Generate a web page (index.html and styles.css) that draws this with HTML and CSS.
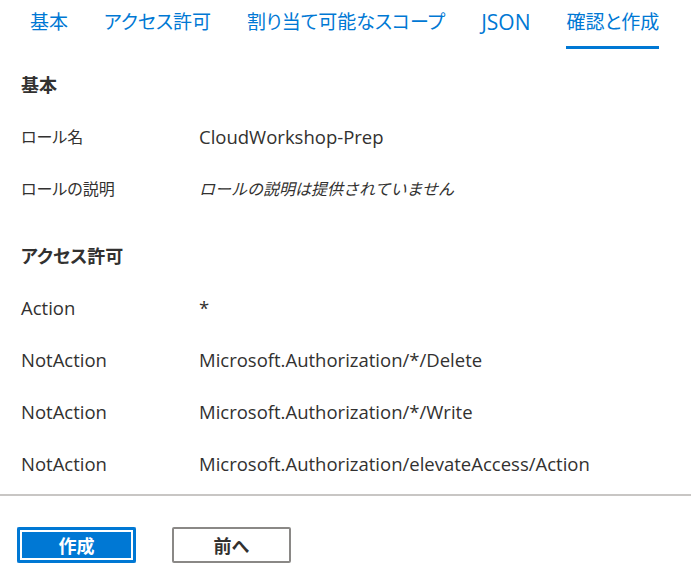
FILE: index.html
```html
<!DOCTYPE html>
<html lang="ja">
<head>
<meta charset="utf-8">
<title>確認と作成</title>
<link rel="stylesheet" href="styles.css">
</head>
<body>
<nav class="tabs">
  <span class="tab">基本</span>
  <span class="tab">アクセス許可</span>
  <span class="tab">割り当て可能なスコープ</span>
  <span class="tab en">JSON</span>
  <span class="tab active">確認と作成</span>
</nav>
<main class="content">
  <h2 class="section">基本</h2>
  <div class="row"><span class="label">ロール名</span><span class="value en">CloudWorkshop-Prep</span></div>
  <div class="row"><span class="label">ロールの説明</span><span class="value empty">ロールの説明は提供されていません</span></div>
  <h2 class="section spaced">アクセス許可</h2>
  <div class="row"><span class="label en">Action</span><span class="value en">*</span></div>
  <div class="row"><span class="label en">NotAction</span><span class="value en">Microsoft.Authorization/*/Delete</span></div>
  <div class="row"><span class="label en">NotAction</span><span class="value en">Microsoft.Authorization/*/Write</span></div>
  <div class="row"><span class="label en">NotAction</span><span class="value en">Microsoft.Authorization/elevateAccess/Action</span></div>
</main>
<footer class="footer">
  <button class="btn primary">作成</button>
  <button class="btn secondary">前へ</button>
</footer>
</body>
</html>
```
FILE: styles.css
```css
html, body {
  margin: 0;
  padding: 0;
  background: #ffffff;
}
body {
  font-family: "Open Sans", "Noto Sans CJK JP", sans-serif;
  font-feature-settings: "palt";
  color: #323130;
  width: 691px;
  height: 576px;
  overflow: hidden;
}
.tabs {
  display: flex;
  gap: 36px;
  padding-left: 30px;
  height: 49px;
}
.tab {
  font-size: 19px;
  line-height: 28px;
  padding-top: 8px;
  height: 38px;
  color: #0078d4;
  border-bottom: 3px solid transparent;
  white-space: nowrap;
}
.tab.en {
  font-size: 21px;
}
.tab.active {
  border-bottom-color: #0078d4;
}
.content {
  padding: 10px 0 0 21px;
}
.section {
  margin: 0;
  font-size: 18px;
  font-weight: 700;
  line-height: 52px;
  height: 52px;
}
.section.spaced {
  margin-top: 15px;
}
.row {
  display: grid;
  grid-template-columns: 178px 1fr;
  height: 52px;
  align-items: center;
  font-size: 16px;
  line-height: 24px;
}
.row .en {
  font-size: 18.5px;
}
.value.empty {
  font-style: italic;
  font-feature-settings: normal;
}
.footer {
  margin-top: 4px;
  border-top: 2px solid #c8c6c4;
  padding: 31px 0 0 17px;
  display: flex;
  gap: 36px;
}
.btn {
  width: 119px;
  height: 36px;
  border-radius: 2px;
  font-family: "Noto Sans CJK JP", sans-serif;
  font-size: 18px;
  font-weight: 700;
  padding: 0;
  cursor: pointer;
}
.btn.primary {
  background: #0078d4;
  color: #ffffff;
  border: 0;
  box-shadow: inset 0 0 0 3px #0078d4, inset 0 0 0 5px #ffffff;
}
.btn.secondary {
  background: #ffffff;
  color: #323130;
  border: 2px solid #8a8886;
}
```
